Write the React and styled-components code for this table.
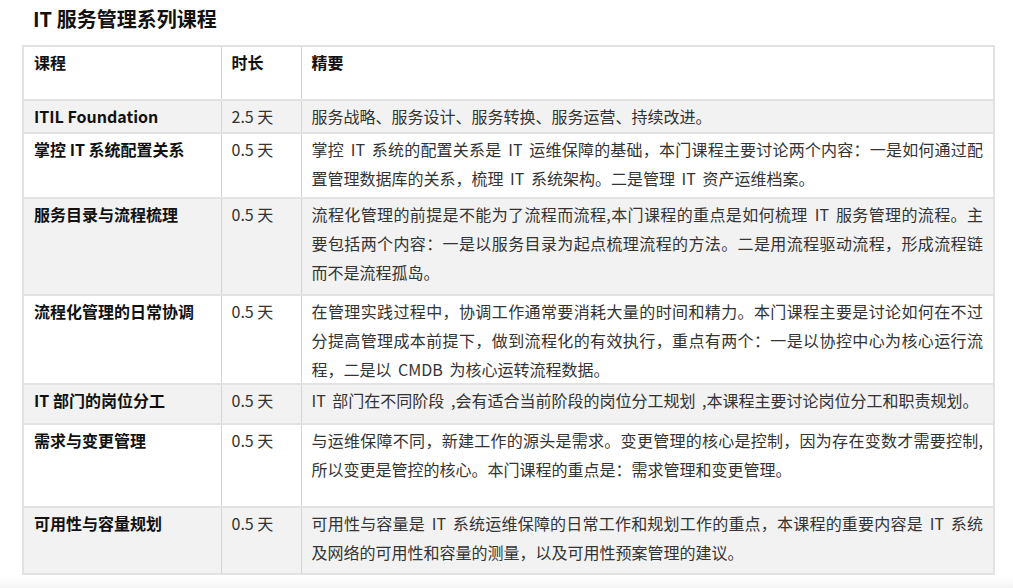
import React from 'react';
import styled, {createGlobalStyle} from 'styled-components';

const GlobalStyle = createGlobalStyle`
  html, body {
    margin:0;
    padding:0;
    background:#fff;
  }
  body {
    font-family:"Noto Sans CJK SC", "Noto Sans", sans-serif;
    color:#333;
  }
`

const Page = styled.div`
  width:1013px;
  height:588px;
  padding:4px 0 0 22px;
  box-sizing:border-box;
  overflow:hidden;
  background:linear-gradient(to bottom, #fff 0, #fff 578px, #f4f4f4 588px);
`

const Title = styled.h3`
  margin:0 0 11px 11px;
  font-size:20px;
  line-height:30px;
  font-weight:bold;
  color:#111;
`

const Table = styled.table`
  width:973px;
  border-collapse:collapse;
  table-layout:fixed;
  border:2px solid #e2e2e2;
  font-size:16px;
  line-height:28.8px;
`

const Row = styled.tr`
  height:${props => props.$h}px;
  background:${props => props.$shade ? '#f2f2f2' : '#fff'};
  border-bottom:2px solid #e2e2e2;
`

const Cell = styled.td`
  vertical-align:top;
  padding:1px 10px 0 10px;
  border-right:1px solid #d4d4d4;
  text-align:${props => props.$justify ? 'justify' : 'left'};
  font-weight:${props => props.$bold ? 'bold' : 'normal'};
  color:${props => props.$bold ? '#111' : '#333'};
  word-spacing:${props => props.$justify ? '3px' : '0'};
  &:last-child {
    border-right:none;
  }
`

const courses = [
  {name:'ITIL Foundation', days:'2.5 天', h:33, text:'服务战略、服务设计、服务转换、服务运营、持续改进。'},
  {name:'掌控 IT 系统配置关系', days:'0.5 天', h:65, text:'掌控 IT 系统的配置关系是 IT 运维保障的基础，本门课程主要讨论两个内容：一是如何通过配置管理数据库的关系，梳理 IT 系统架构。二是管理 IT 资产运维档案。'},
  {name:'服务目录与流程梳理', days:'0.5 天', h:97, text:'流程化管理的前提是不能为了流程而流程,本门课程的重点是如何梳理 IT 服务管理的流程。主要包括两个内容：一是以服务目录为起点梳理流程的方法。二是用流程驱动流程，形成流程链而不是流程孤岛。'},
  {name:'流程化管理的日常协调', days:'0.5 天', h:88, text:'在管理实践过程中，协调工作通常要消耗大量的时间和精力。本门课程主要是讨论如何在不过分提高管理成本前提下，做到流程化的有效执行，重点有两个：一是以协控中心为核心运行流程，二是以 CMDB 为核心运转流程数据。'},
  {name:'IT 部门的岗位分工', days:'0.5 天', h:40, text:'IT 部门在不同阶段 ,会有适合当前阶段的岗位分工规划 ,本课程主要讨论岗位分工和职责规划。'},
  {name:'需求与变更管理', days:'0.5 天', h:83, text:'与运维保障不同，新建工作的源头是需求。变更管理的核心是控制，因为存在变数才需要控制,所以变更是管控的核心。本门课程的重点是：需求管理和变更管理。'},
  {name:'可用性与容量规划', days:'0.5 天', h:67, text:'可用性与容量是 IT 系统运维保障的日常工作和规划工作的重点，本课程的重要内容是 IT 系统及网络的可用性和容量的测量，以及可用性预案管理的建议。'},
];

const App = () => {
  return (
    <Page>
      <GlobalStyle/>
      <Title>IT 服务管理系列课程</Title>
      <Table>
        <colgroup>
          <col style={{width:198}}/>
          <col style={{width:80}}/>
          <col/>
        </colgroup>
        <tbody>
          <Row $h={54}>
            <Cell $bold>课程</Cell>
            <Cell $bold>时长</Cell>
            <Cell $bold>精要</Cell>
          </Row>
          {courses.map((c, i) => (
            <Row key={c.name} $h={c.h} $shade={i % 2 === 0}>
              <Cell $bold>{c.name}</Cell>
              <Cell>{c.days}</Cell>
              <Cell $justify>{c.text}</Cell>
            </Row>
          ))}
        </tbody>
      </Table>
    </Page>
  )
}

export default App;
